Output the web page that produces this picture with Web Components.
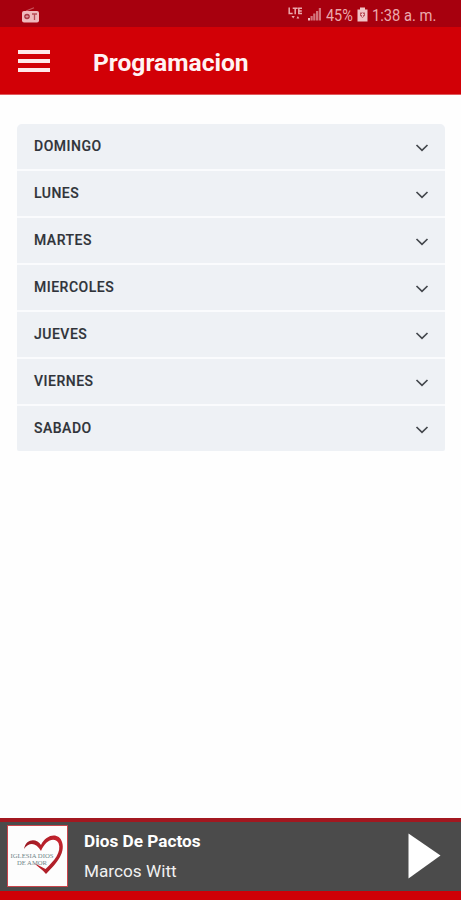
<!DOCTYPE html>
<html lang="es">
<head>
<meta charset="utf-8">
<title>Programacion</title>
<style>
  body {
    margin: 0;
    background: #fefefe;
    font-family: Roboto, "Liberation Sans", sans-serif;
  }
</style>
</head>
<body>
<radio-app></radio-app>

<script>
class StatusBar extends HTMLElement {
  constructor() {
    super();
    this.attachShadow({ mode: "open" });
  }

  connectedCallback() {
    this.shadowRoot.innerHTML = `
      <style>
        :host {
          display: flex;
          align-items: center;
          box-sizing: border-box;
          height: 27px;
          padding: 4px 24px 0 21px;
          background: #a7000e;
          color: #eba9ad;
          font-size: 16px;
          line-height: 22px;
          white-space: nowrap;
        }
        svg { display: block; flex: none; }
        .radio { margin-right: auto; margin-top: -3px; }
        .lte { margin-right: 4px; margin-top: -3px; }
        .signal { margin-right: 4px; margin-top: -3px; }
        .battery { margin: -3px 4px 0 4px; }
        .level { width: 27px; }
        .time { width: 65px; }
        span { display: block; }
        .level span, .time span { transform-origin: 0 50%; }
        .level span { transform: scaleX(.9); }
        .time span { transform: scaleX(.92); }
      </style>
      <svg class="radio" width="19" height="17" viewBox="0 0 19 17">
        <path d="M5 5 13 1.8" stroke="#c9555e" stroke-width="1.2"/>
        <rect x="1" y="5" width="17" height="11.5" rx="2" fill="#f0b9bc"/>
        <circle cx="6" cy="10.5" r="2.8" fill="#a93642"/>
        <path d="M4.5 10.5h3M6 9v3" stroke="#dc929a"/>
        <path d="M11 8h5M13.5 8v6" stroke="#b64b56" stroke-width="1.3"/>
      </svg>
      <svg class="lte" width="15" height="16" viewBox="0 0 15 16" fill="none" stroke="#eba9ad" stroke-width="1.5">
        <path d="M1.2 1.5v6h3.5M4.7 2.2h5M7.2 2.2v6M14 2.2h-3.2v5.3H14M10.8 4.9h3"/>
        <path d="m3.5 10 1.7 2.5L6.8 10zM8.5 12.5l1.4-2.5 1.4 2.5z" fill="#eba9ad" stroke="none"/>
      </svg>
      <svg class="signal" width="15" height="14" viewBox="0 0 15 14">
        <path d="M1 11h2v2.5H1z" fill="#f4bcc0"/>
        <path d="M3.5 9h2.2v4.5H3.5zM6.2 6.5h2.2v7H6.2zM9 4h2.2v9.5H9zM11.8 1H14v12.5h-2.2z" fill="#d4737b"/>
      </svg>
      <div class="level"><span>45%</span></div>
      <svg class="battery" width="11" height="15" viewBox="0 0 11 15">
        <path d="M3 .5h5v2h2.5v12H.5v-12H3z" fill="#f1c4c6"/>
        <path d="M3 5.5h5v3L5.5 11 3 8.5z" fill="#bd5962"/>
        <path d="M5.5 6v4M4 7.5h3" stroke="#f1c4c6"/>
      </svg>
      <div class="time"><span>1:38 a. m.</span></div>
    `;
  }
}

class AppHeader extends HTMLElement {
  constructor() {
    super();
    this.attachShadow({ mode: "open" });
  }

  connectedCallback() {
    this.shadowRoot.innerHTML = `
      <style>
        :host {
          display: flex;
          align-items: center;
          box-sizing: border-box;
          height: 68px;
          padding: 1px 18px 0;
          background: #d20006;
          border-bottom: 1px solid #e05a5e;
          color: #fff3f3;
        }
        button {
          display: flex;
          flex-direction: column;
          gap: 5px;
          width: 32px;
          margin: 0 43px 0 0;
          padding: 0;
          border: none;
          background: none;
          cursor: pointer;
        }
        i { height: 4px; background: #ffe9e9; }
        h1 {
          margin: 3px 0 0;
          font-size: 24.6px;
          font-weight: bold;
          line-height: 30px;
        }
      </style>
      <button aria-label="Menu"><i></i><i></i><i></i></button>
      <h1><slot></slot></h1>
    `;
  }
}

class DayItem extends HTMLElement {
  constructor() {
    super();
    this.attachShadow({ mode: "open" });
  }

  connectedCallback() {
    this.shadowRoot.innerHTML = `
      <style>
        :host {
          display: flex;
          align-items: center;
          justify-content: space-between;
          height: 45px;
          padding: 0 16px 0 17px;
          background: #eef1f5;
          color: #30343a;
          font-size: 14px;
          font-weight: 500;
          letter-spacing: .5px;
          line-height: 20px;
        }
        span { margin-bottom: 2px; -webkit-text-stroke: .15px; }
        svg { display: block; margin-top: 2px; }
      </style>
      <span><slot></slot></span>
      <svg width="14" height="10" viewBox="0 0 14 10" fill="none" stroke="#44484d" stroke-width="1.7">
        <path d="m1.5 2 5.500 5.300L12.500 2"/>
      </svg>
    `;
  }
}

class DayList extends HTMLElement {
  constructor() {
    super();
    this.attachShadow({ mode: "open" });
  }

  connectedCallback() {
    this.shadowRoot.innerHTML = `
      <style>
        :host {
          display: grid;
          gap: 2px;
          margin: 29px 16px 0 17px;
          border-radius: 5px 5px 2px 2px;
          background: #fafbfd;
          overflow: hidden;
        }
      </style>
      <slot></slot>
    `;
  }
}

class PlayerBar extends HTMLElement {
  constructor() {
    super();
    this.attachShadow({ mode: "open" });
  }

  connectedCallback() {
    this.shadowRoot.innerHTML = `
      <style>
        :host {
          display: flex;
          align-items: center;
          box-sizing: border-box;
          height: 82px;
          margin-top: auto;
          padding: 0 20px 2px 7px;
          background: #4b4b4b;
          border-top: 4px solid #a31820;
          border-bottom: 9px solid #cf0006;
          color: #fff;
        }
        svg { display: block; flex: none; }
        .cover {
          box-sizing: border-box;
          width: 61px;
          height: 62px;
          border: 1px solid #c9444b;
          background: #fdfdfd;
        }
        .track { flex: 1; margin-left: 16px; }
        .title, .artist { font-size: 17.2px; line-height: 30px; }
        .title { font-weight: bold; }
        .artist { color: #f1f1f1; }
      </style>
      <svg class="cover" viewBox="0 0 59 60">
        <defs>
          <linearGradient id="red" x1="0" y1="0" x2="1" y2="1">
            <stop offset="0" stop-color="#8c1720"/>
            <stop offset=".5" stop-color="#c8242e"/>
            <stop offset="1" stop-color="#981b24"/>
          </linearGradient>
        </defs>
        <path d="M16 23C18 12 29 12 33 19 38 8 51 6 54 16 58 28 46 40 38 48 34 43 30 41 26 37L37.5 43C46 35 54 26 50.5 17 46 10 37 15 33 25 28 16 21 16 16 23Z" fill="url(#red)"/>
        <text x="2.5" y="31.5" textLength="43" lengthAdjust="spacingAndGlyphs" font-family="Liberation Serif, serif" font-size="6" fill="#70868a">IGLESIA DIOS</text>
        <text x="9" y="38.5" textLength="30" lengthAdjust="spacingAndGlyphs" font-family="Liberation Serif, serif" font-size="6" fill="#70868a">DE AMOR</text>
      </svg>
      <div class="track">
        <div class="title"><slot name="title"></slot></div>
        <div class="artist"><slot name="artist"></slot></div>
      </div>
      <svg width="33" height="46" viewBox="0 0 33 46">
        <path d="M.5.5 32.5 22.5.5 45.5z" fill="#fff"/>
      </svg>
    `;
  }
}

class RadioApp extends HTMLElement {
  constructor() {
    super();
    this.attachShadow({ mode: "open" });
    this.days = ["DOMINGO", "LUNES", "MARTES", "MIERCOLES", "JUEVES", "VIERNES", "SABADO"];
  }

  connectedCallback() {
    this.shadowRoot.innerHTML = `
      <style>
        :host {
          display: flex;
          flex-direction: column;
          height: 100vh;
        }
      </style>
      <status-bar></status-bar>
      <app-header>Programacion</app-header>
      <day-list>
        ${this.days.map((day) => `<day-item>${day}</day-item>`).join("")}
      </day-list>
      <player-bar>
        <span slot="title">Dios De Pactos</span>
        <span slot="artist">Marcos Witt</span>
      </player-bar>
    `;
  }
}

customElements.define("status-bar", StatusBar);
customElements.define("app-header", AppHeader);
customElements.define("day-item", DayItem);
customElements.define("day-list", DayList);
customElements.define("player-bar", PlayerBar);
customElements.define("radio-app", RadioApp);
</script>
</body>
</html>
